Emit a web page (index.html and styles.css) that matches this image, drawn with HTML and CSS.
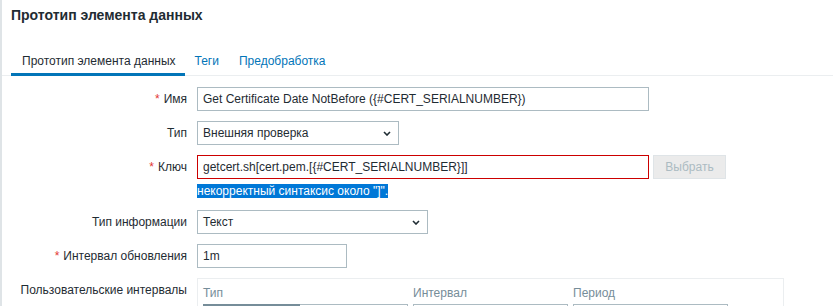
FILE: index.html
```html
<!DOCTYPE html>
<html lang="ru">
  <head>
    <meta charset="utf-8">
    <title>Прототип элемента данных</title>
    <link rel="stylesheet" href="styles.css">
  </head>
<body>
  <div class="page">

    <!-- page title -->
    <div class="page-header">
      <h1>Прототип элемента данных</h1>
    </div>

    <!-- tabs -->
    <ul class="tabs">
      <li class="active"><a href="#">Прототип элемента данных</a></li>
      <li><a href="#">Теги</a></li>
      <li><a href="#">Предобработка</a></li>
    </ul>

    <!-- the form itself -->
    <div class="form-grid">
      <label class="lbl"><span class="req">*</span>Имя</label>
      <div class="field">
        <input type="text" class="input w-wide" value="Get Certificate Date NotBefore ({#CERT_SERIALNUMBER})" />
      </div>

      <label class="lbl">Тип</label>
      <div class="field">
        <div class="select w-type">
          <span>Внешняя проверка</span>
          <svg width="8" height="5" viewBox="0 0 8 5"><path d="M1 1 L4 4 L7 1" /></svg>
        </div>
      </div>

      <label class="lbl"><span class="req">*</span>Ключ</label>
      <div class="field">
        <div class="key-line">
          <input type="text" class="input w-wide has-error" value="getcert.sh[cert.pem.[{#CERT_SERIALNUMBER}]]" />
          <button class="btn-alt" disabled>Выбрать</button>
        </div>
        <div class="error"><span>некорректный синтаксис около "]".</span></div>
      </div>

      <label class="lbl">Тип информации</label>
      <div class="field">
        <div class="select w-info">
          <span>Текст</span>
          <svg width="8" height="5" viewBox="0 0 8 5"><path d="M1 1 L4 4 L7 1" /></svg>
        </div>
      </div>

      <label class="lbl"><span class="req">*</span>Интервал обновления</label>
      <div class="field">
        <input type="text" class="input w-small" value="1m" />
      </div>

      <label class="lbl">Пользовательские интервалы</label>
      <div class="field">
        <div class="intervals">
          <div class="th">Тип</div>
          <div class="th">Интервал</div>
          <div class="th">Период</div>
          <div class="th"></div>

          <!-- first row, only its top edge is in view -->
          <div class="radio-list">
            <span class="on"></span>
            <span></span>
          </div>
          <input type="text" class="input" />
          <input type="text" class="input" />
          <div></div>
        </div>
      </div>
    </div>

  </div>
</body>
</html>
```

FILE: styles.css
```css
* {
  box-sizing: border-box;
}
html, body {
  margin: 0;
  overflow: hidden;
  background-color: #fff;
}
body {
  font: 12px "Liberation Sans", Arial, sans-serif;
  color: #1f2c33;
}
.page {
  min-height: 100vh;
  border-left: 2px solid #dfe4e7;
}

.page-header {
  padding: 7px 9px 0;
}
.page-header h1 {
  margin: 0;
  font-size: 14px;
  line-height: 16px;
  font-weight: bold;
  color: #1f2c33;
}

.tabs {
  display: flex;
  list-style: none;
  margin: 31px 0 0;
  padding: 0 0 0 9px;
  border-bottom: 1px solid #ebeef0;
}
.tabs li {
  margin-bottom: -1px;
  padding: 0 10px 5px;
  line-height: 14px;
  border-bottom: 3px solid transparent;
}
.tabs li a {
  color: #0275b8;
  text-decoration: none;
}
.tabs li.active {
  padding-left: 11px;
  padding-right: 9px;
  border-bottom-color: #0275b8;
}
.tabs li.active a {
  color: #1f2c33;
}

.form-grid {
  display: grid;
  grid-template-columns: 176px 1fr;
  column-gap: 10px;
  row-gap: 10px;
  padding: 11px 9px 0;
}
.lbl {
  text-align: right;
  line-height: 24px;
  white-space: nowrap;
}
.req {
  color: #e33734;
  margin-right: 4px;
}

.input {
  height: 24px;
  padding: 0 5px;
  border: 1px solid #acbbc2;
  background-color: #fff;
  font: inherit;
  color: #1f2c33;
  outline: none;
}
.input.has-error {
  border-color: #cc0000;
}
.w-wide { width: 452px; }
.w-type { width: 202px; }
.w-info { width: 231px; }
.w-small { width: 150px; }

.select {
  display: flex;
  align-items: center;
  justify-content: space-between;
  height: 24px;
  padding: 0 7px 0 5px;
  border: 1px solid #acbbc2;
  background-color: #fff;
}
.select svg path {
  fill: none;
  stroke: #1f2c33;
  stroke-width: 1.6;
}

.key-line {
  display: flex;
  gap: 4px;
}
.btn-alt {
  width: 73px;
  height: 24px;
  padding: 0;
  font: inherit;
  color: #acbbc2;
  background-color: #ebebeb;
  border: 1px solid #dfe4e7;
}
.error {
  margin: 5px 0 2px;
}
.error span {
  display: inline-block;
  line-height: 14px;
  background-color: #0078d7;
  color: #fff;
}

.intervals {
  display: grid;
  grid-template-columns: 205px 155px 155px auto;
  column-gap: 5px;
  row-gap: 4px;
  width: 587px;
  padding: 7px 5px 5px;
  border: 1px solid #ebeef0;
}
.intervals .th {
  min-height: 14px;
  line-height: 14px;
  color: #768d99;
}
.intervals .input {
  width: 155px;
}
.radio-list {
  display: flex;
}
.radio-list span {
  height: 24px;
  border: 1px solid #acbbc2;
}
.radio-list span.on {
  width: 97px;
  background-color: #768d99;
  border-color: #768d99;
}
.radio-list span:last-child {
  width: 108px;
  border-left: 0;
}
```
